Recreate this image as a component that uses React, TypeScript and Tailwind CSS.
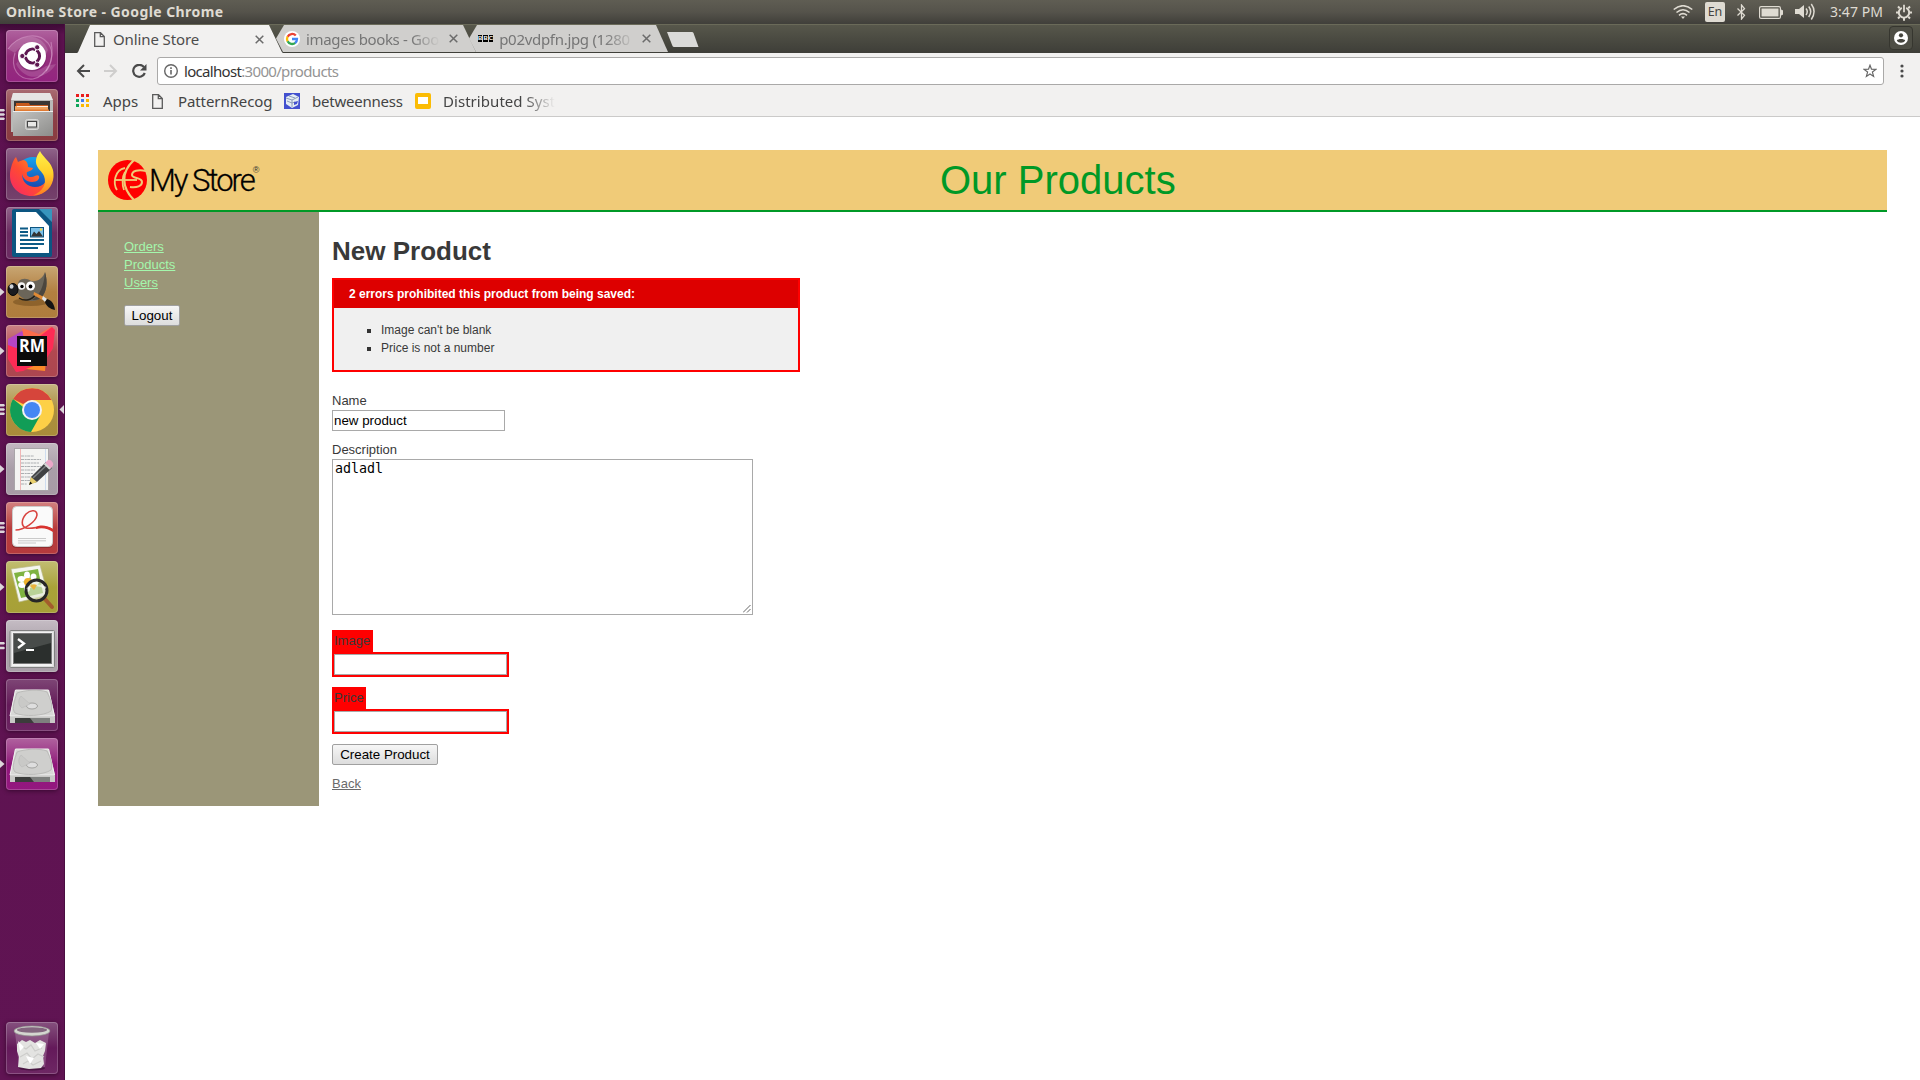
import React from 'react';

const UI = "font-['Noto_Sans',sans-serif]";

/* ---------- launcher icons, all on a 52x52 canvas ---------- */

const Ubuntu = () => (
  <g>
    <path d="M2 19c10-14 30-18 40-6 7 9 3 22-2 28" fill="none" stroke="#d79ccb" strokeOpacity=".55" strokeWidth="1.2" />
    <path d="M45 12c4 18-4 34-18 37C12 50 4 38 9 23" fill="none" stroke="#d79ccb" strokeOpacity=".55" strokeWidth="1.2" />
    <path d="M2 19C14 2 36 3 42 20l-4 8C36 14 20 8 9 23z" fill="#fff" fillOpacity=".15" />
    <path d="M50 34c-8 14-30 20-40 0l4-6c4 12 16 16 26 8z" fill="#fff" fillOpacity=".15" />
    <circle cx="26" cy="27" r="14.5" fill="#5c1150" fillOpacity=".35" />
    <circle cx="26" cy="26" r="14" fill="#fff" />
    <circle cx="26.5" cy="26" r="7" fill="none" stroke="#5e1751" strokeWidth="3.2" />
    <path d="M26.5 26H16M26.500 26l5.200-9.200M26.500 26l5.200 9.200" stroke="#fff" strokeWidth="1.300" />
    <circle cx="26.500" cy="26" r="5.400" fill="#fff" />
    {[[16.3, 26], [31.2, 17.300], [31.200, 34.700]].map(([x, y]) => (
      <circle key={y} cx={x} cy={y} r="2.600" fill="#5e1751" stroke="#fff" strokeWidth=".9" />
    ))}
  </g>
);

const Files = () => (
  <g>
    <path d="M7 4h37l3 8v31H5V12z" fill="#b9b9b7" />
    <path d="M7 4h37l3 7H5z" fill="#e6e6e4" />
    <rect x="8" y="12" width="36" height="12" fill="#3a3734" />
    <path d="M10 14h13l1 2h18v7H10z" fill="#c65a1c" />
    <path d="M9 17h33v6H9z" fill="#f0a25c" />
    <path d="M11 17.500h31" stroke="#fff0df" strokeWidth="1" />
    <path d="M9 20.500h34v3H9z" fill="#e07a32" />
    <path d="M7 22h40v25H7z" fill="url(#steel)" />
    <path d="M7 22.500h40" stroke="#eee" />
    <rect x="19.500" y="30.500" width="13" height="10" rx="2" fill="#b8b8b6" stroke="#d9d9d7" />
    <rect x="21.500" y="32.500" width="9" height="5.500" fill="#e8e8e6" stroke="#444" />
  </g>
);

const Firefox = () => (
  <g>
    <circle cx="27" cy="26" r="17" fill="url(#ffBlue)" />
    <path d="M5 20c1-5 3-9 5-11l2 5c2-1 4-2 6-2 3 1 4 4 4 7l5 1c-1 3-4 3-6 4-1 3 1 5 4 5 4 0 6-3 8-1 1 3-2 6-7 6-6 0-9-4-10-8 0 8 6 13 13 13 9 0 14-7 13-15 3 4 3 9 1 13-3 7-9 11-17 11C12 48 4 38 4 28c0-3 0-5 1-8z" fill="url(#ffRed)" />
    <path d="M34 3c1 3 4 5 6 8 6 6 8 11 7.500 18C47 38 40 47 27 47.500 37 43 41 36 38 28c-2-5-7-7-8-13-.5-5 2-9 4-12z" fill="url(#ffYellow)" />
  </g>
);

const Writer = () => (
  <g>
    <path d="M8 2h27l11 13v33a2 2 0 0 1-2 2H8a2 2 0 0 1-2-2V4a2 2 0 0 1 2-2z" fill="#0c5581" />
    <path d="M33 2h13v13z" fill="#3795bd" />
    <path d="M10 5h20l13 14v27H10z" fill="#fff" />
    <path d="M14 21.500h8M14 25h8M14 28.500h8M14 33h24M14 37h24M14 41h18" stroke="#0c5a86" strokeWidth="1.800" />
    <rect x="24.500" y="20.500" width="13" height="9.500" fill="#7cc0e8" stroke="#0c5581" />
    <path d="M25 29.500l3-5 2.500 2.500 2.500-3 4 5.500z" fill="#333" />
    <circle cx="35" cy="22.500" r="1.200" fill="#f5d547" />
  </g>
);

const Gimp = () => (
  <g>
    <ellipse cx="25" cy="36" rx="18" ry="4" fill="#5b3a12" opacity=".4" />
    <path d="M39 6c3 10 2 20-4 26-6 5-15 3-20-1l-6-6 4-10c3-3 8-3 12 0 7 1 12-3 14-9z" fill="#6b6559" />
    <path d="M39 6c3 10 2 20-4 26-3 2-6 2-9 2 8-5 12-14 13-28z" fill="#4b463e" />
    <circle cx="15.500" cy="20" r="3.800" fill="#f3f3f3" />
    <circle cx="24.500" cy="20" r="4.500" fill="#fff" />
    <circle cx="16" cy="20.500" r="1.700" />
    <circle cx="24.500" cy="20.500" r="1.900" />
    <ellipse cx="7" cy="23.500" rx="5" ry="6" fill="#1b1c20" stroke="#050505" />
    <ellipse cx="5.500" cy="20.500" rx="2" ry="2.200" fill="#cfd3d8" />
    <path d="M13 32c6 4 13 2 17-4" fill="none" stroke="#242019" strokeWidth="1.500" />
    <path d="M28 26l10 5-1.500 3-9-5z" fill="#e08a34" />
    <path d="M37 30l4 3-2 3-3-3z" fill="#dfe3e6" />
    <path d="M41 33c4 1 7 4 8 11-5-1-9-4-10-8z" fill="#141414" />
  </g>
);

const RubyMine = () => (
  <g>
    <path d="M2 14l14-8 17 8-15 30-7 3L2 33z" fill="#b545c4" />
    <path d="M16 3l17 6 12-7 4 3-3 20-16 6-12-16z" fill="#fb6c4c" />
    <path d="M2 20l8 3 20-9 16-12 3 3-2 18-8 13-22 10-7 1L2 34z" fill="#fd2b55" />
    <path d="M20 44l20-8-1 10z" fill="#fb8a2a" />
    <rect x="11" y="11" width="30" height="30" fill="#0b0b0b" />
    <text x="13" y="27.300" fontFamily="Open Sans" fontWeight="700" fontSize="17" fill="#fff" textLength="26" lengthAdjust="spacingAndGlyphs">RM</text>
    <rect x="14" y="35" width="11" height="2" fill="#fff" />
  </g>
);

const Chrome = () => (
  <g>
    <circle cx="26" cy="26" r="22" fill="#fdd047" />
    <path d="M45.500 16H26l-9 4-10-5A22 22 0 0 1 45.500 16z" fill="#d6453b" />
    <path d="M7 15A22 22 0 0 0 25 48l9-16-8-2z" fill="#119d57" />
    <circle cx="26" cy="26" r="10" fill="#f2f2f2" />
    <circle cx="26" cy="26" r="8" fill="#4587f3" />
  </g>
);

const Gedit = () => (
  <g>
    <rect x="8.500" y="5.500" width="34" height="42" fill="#f4f4f2" stroke="#a9a5a8" />
    <path d="M14.500 6v41" stroke="#efa6a6" strokeWidth=".8" />
    <path d="M39.500 6v41" stroke="#b5cdec" strokeWidth=".6" />
    <path d="M15 13h13M15 16.500h20M15 20h18M15 23.500h20M15 27h14M15 30.500h12M15 34h11M15 37.500h9M15 41h6" stroke="#a3a6a9" strokeWidth=".9" strokeDasharray="3 .7 2 .5" />
    <path d="M25 34l15-15 6 6-15 14-7 2z" fill="#3f4142" />
    <path d="M27 35l15-14" stroke="#7c7f80" strokeWidth="1.500" />
    <path d="M25 34l6 5-8 3z" fill="#e8cf6d" />
    <path d="M23 42l1.200-3.500 2 2z" fill="#111" />
    <path d="M39 20l3-3q3-1 5 3 1 2-1 4l-2 2z" fill="#eba7c8" />
    <path d="M38.500 20.500l5.500 5.500" stroke="#d7d7d7" strokeWidth="2" />
  </g>
);

const Pdf = () => (
  <g>
    <rect x="6" y="5" width="40.500" height="41" rx="4" fill="#6b2020" opacity=".5" />
    <rect x="6.500" y="4.500" width="40" height="40" rx="4" fill="#fafafa" stroke="#ccc" />
    <path d="M9.500 28C18 28 30 20 31 13c0-5-6-6-11-1-5 6-5 12 0 14 8 2 18-5 27 2" fill="none" stroke="#d8433f" strokeWidth="1.600" />
    <path d="M30 25c6-3 11-1 17 2v3c-5-3-10-5-17-3z" fill="#d8332f" />
    <path d="M12 36.500h28M12 38.800h28M12 41h18" stroke="#c4c4c4" strokeWidth=".9" />
  </g>
);

const ImageViewer = () => (
  <g>
    <path d="M5 8l29-4 8 30-29 7z" fill="#f5f6ef" stroke="#b8b98a" strokeWidth=".7" />
    <path d="M8 12l24-4 5 24-22 5z" fill="#7fb341" />
    <g fill="#fff">
      <ellipse cx="21" cy="14.500" rx="3" ry="4" /><ellipse cx="27.500" cy="16" rx="3" ry="3.500" /><ellipse cx="29" cy="21" rx="4" ry="3" />
      <ellipse cx="15.500" cy="18" rx="4" ry="3" /><ellipse cx="16" cy="24" rx="3.800" ry="3" /><ellipse cx="21" cy="27.500" rx="3" ry="3.500" />
    </g>
    <circle cx="22" cy="21" r="4" fill="#efb12d" />
    <path d="M38 37l8 9" stroke="#a35d2c" strokeWidth="4" strokeLinecap="round" />
    <circle cx="30.500" cy="29.500" r="10.500" fill="#dfe8d0" fillOpacity=".6" stroke="#262626" strokeWidth="3" />
    <path d="M21 28q8-7 19-1" fill="none" stroke="#fff" strokeOpacity=".6" strokeWidth="2" />
    <path d="M24 25q3-3 7-1l-3 5z" fill="#eab33c" />
  </g>
);

const Terminal = () => (
  <g>
    <rect x="4" y="10.500" width="44.500" height="37" rx="1" fill="#dcdcdc" stroke="#808080" />
    <rect x="6" y="12" width="40.500" height="34" fill="#f3f3f3" />
    <rect x="7.500" y="13.500" width="38" height="30" fill="#2b2f2d" stroke="#777" />
    <path d="M8 14h37v9L8 33z" fill="#484c4a" />
    <path d="M12 19l6 4.500-6 4.500" fill="none" stroke="#fff" strokeWidth="2.300" />
    <path d="M20 30h8" stroke="#fff" strokeWidth="2" />
  </g>
);

const Drive = () => (
  <g>
    <path d="M9 11h34l6 26v7H4v-7z" fill="#b5b5b3" />
    <path d="M9.500 11h33l6 26H4z" fill="#d8d8d6" stroke="#f1f1f0" />
    <path d="M11 14c8-3 22-4 30-1 4 8 6 14 4 19-7 5-27 6-36 2-4-5 0-13 2-20z" fill="#cfcfcd" stroke="#b8b8b6" strokeWidth=".9" />
    <ellipse cx="26" cy="27" rx="5.500" ry="3" fill="#dedede" stroke="#a3a3a1" />
    <path d="M15 17c-4 5-2 10 1 12l8-4z" fill="#c9c9c7" stroke="#bbb" strokeWidth=".6" />
    <path d="M4 38h45v6H4z" fill="#c9c9c7" />
    <path d="M9 39h35v5H9z" fill="#3b3c3b" />
    <path d="M24 39h20v5H28z" fill="#7e807e" />
  </g>
);

const Trash = () => (
  <g>
    <path d="M9 10l4 35c4 3 22 3 26 0l4-35z" fill="#b48bb0" fillOpacity=".4" />
    <ellipse cx="26" cy="46" rx="13" ry="2.500" fill="#2c0826" opacity=".55" />
    <path d="M11 22l5-4 4 2 4-2 5 3 5-3 6 3-1 8-2 5 1 8-3 4-12 1-11-2 1-10-2-6z" fill="#e3e3e1" />
    <path d="M15 24l5 3 5-4 4 6 7-3M14 35l7-4 5 6 6-5 6 3M17 42l5-3 5 4 8-4" fill="none" stroke="#cdcdcb" strokeWidth="1.200" />
    <path d="M12 19l6 6-4 4zM30 21l4 6 4-5zM20 34l4 8 4-6z" fill="#fff" />
    <ellipse cx="26" cy="9" rx="18" ry="5" fill="#d4d6d0" stroke="#92958f" strokeWidth=".7" />
    <ellipse cx="26" cy="8" rx="15" ry="2.700" fill="#83667f" />
  </g>
);

type Item = { name: string; icon: () => React.JSX.Element; bg: string; pip?: 'one' | 'two' | 'three'; active?: boolean };

const ITEMS: Item[] = [
  { name: 'Search', icon: Ubuntu, bg: 'from-[#b0629f] via-[#94307c] to-[#942480]' },
  { name: 'Files', icon: Files, bg: 'from-[#a96c72] via-[#8c4049] to-[#8a3c40]', pip: 'three' },
  { name: 'Firefox', icon: Firefox, bg: 'from-[#90648a] via-[#6b3262] to-[#75426c]' },
  { name: 'Writer', icon: Writer, bg: 'from-[#90648a] via-[#6b2a60] to-[#6c2d63]' },
  { name: 'GIMP', icon: Gimp, bg: 'from-[#c8a673] via-[#b28040] to-[#ae7c3d]', pip: 'one' },
  { name: 'RubyMine', icon: RubyMine, bg: 'from-[#cb8286] via-[#b14850] to-[#ac4650]', pip: 'one' },
  { name: 'Chrome', icon: Chrome, bg: 'from-[#c6b481] via-[#ab903f] to-[#a98c3a]', pip: 'three', active: true },
  { name: 'Text Editor', icon: Gedit, bg: 'from-[#c3b8c1] via-[#a99ea8] to-[#a79ba5]', pip: 'one' },
  { name: 'Document Viewer', icon: Pdf, bg: 'from-[#d28080] via-[#b83c3d] to-[#b53a3d]', pip: 'three' },
  { name: 'Image Viewer', icon: ImageViewer, bg: 'from-[#c2bd72] via-[#a9a338] to-[#a7a038]', pip: 'one' },
  { name: 'Terminal', icon: Terminal, bg: 'from-[#c5bcc4] via-[#a89fa7] to-[#aaa1a9]', pip: 'two' },
  { name: 'Drive', icon: Drive, bg: 'from-[#7e4676] via-[#641a59] to-[#6c2562]' },
  { name: 'Volume', icon: Drive, bg: 'from-[#b0629f] via-[#90167b] to-[#94187f]', pip: 'one' },
];

const Tile = ({ item }: { item: Item }) => {
  const Icon = item.icon;
  return (
    <div className="relative flex h-[52px] w-full shrink-0 pl-[6px]">
      {item.pip && (
        <svg className="absolute left-0 top-[18px]" width="5" height="16" fill="#dcd6da">
          {item.pip === 'one' && <path d="M0 4l4.500 4L0 12z" />}
          {item.pip === 'two' && <path d="M0 4h4l1 1.200-1 1.200H0zM0 8.800h4l1 1.200-1 1.200H0z" />}
          {item.pip === 'three' && <path d="M0 2h4l1 1.200-1 1.200H0zM0 6.300h4l1 1.200-1 1.200H0zM0 10.600h4l1 1.200-1 1.200H0z" />}
        </svg>
      )}
      <div className={`h-[52px] w-[52px] overflow-hidden rounded-[4px] bg-linear-to-b shadow-[0_1px_4px_rgba(30,0,25,0.6)] ring-1 ring-inset ring-white/20 ${item.bg}`}>
        <svg width="52" height="52" viewBox="0 0 52 52"><Icon /></svg>
      </div>
      {item.active && (
        <svg className="absolute left-[59px] top-[21px]" width="6" height="10" fill="#dcd6da"><path d="M5 0v9L.5 4.500z" /></svg>
      )}
    </div>
  );
};

const Launcher = () => (
  <div className="flex w-[65px] shrink-0 flex-col gap-[7px] border-r border-[#4a0d41] bg-linear-to-b from-[#3d0a36] via-[#5c114f] via-[1%] to-[#601453] pb-[6px] pt-[6px]">
    <svg className="absolute" width="0" height="0">
      <defs>
        <linearGradient id="steel" x2="1" y2="1"><stop stopColor="#c4c4c2" /><stop offset="1" stopColor="#8d8d8b" /></linearGradient>
        <linearGradient id="ffRed" x1=".9" x2="0" y1=".1" y2="1"><stop stopColor="#ff9a1f" /><stop offset=".5" stopColor="#ff4b32" /><stop offset="1" stopColor="#f5236c" /></linearGradient>
        <linearGradient id="ffYellow" x2="0" y2="1"><stop stopColor="#fff04a" /><stop offset=".5" stopColor="#ffd02a" /><stop offset="1" stopColor="#ff7a22" /></linearGradient>
        <linearGradient id="ffBlue" x2="0" y2="1"><stop stopColor="#15a4ee" /><stop offset="1" stopColor="#1a3fa8" /></linearGradient>
      </defs>
    </svg>
    {ITEMS.map((i) => <Tile key={i.name} item={i} />)}
    <div className="mt-auto"><Tile item={{ name: 'Trash', icon: Trash, bg: 'from-[#85507e] via-[#64195a] to-[#6e2764]' }} /></div>
  </div>
);

/* ---------- top panel ---------- */

const TopPanel = () => (
  <div className={`flex h-6 items-center bg-linear-to-b from-[#5f5d53] via-[#55534b] to-[#403f3a] text-[#dfdbd2] ${UI}`}>
    <div className="ml-[6px] text-[14px] font-bold leading-6 tracking-[0.42px]">Online Store - Google Chrome</div>
    <svg className="ml-auto" width="20" height="14" viewBox="0 0 20 14" fill="none" stroke="#dfdbd2" strokeWidth="1.600">
      <path d="M.7 4.500Q10-3 19.300 4.500M3.500 7.500Q10 2 16.500 7.500M6 10.300Q10 7 14 10.300" />
      <path d="M8 11.500h4l-2 2.500z" fill="#dfdbd2" stroke="none" />
    </svg>
    <div className="ml-3 flex h-5 w-5 items-center justify-center rounded-[2px] bg-[#dfdbd2] text-[12.5px] leading-none text-[#45443f]">En</div>
    <svg className="ml-3" width="9" height="16" viewBox="0 0 9 16" fill="none" stroke="#dfdbd2" strokeWidth="1.300"><path d="M.5 4.500l7 6.800L4.500 15V1l3 3.700-7 6.800" /></svg>
    <svg className="ml-[13px]" width="24" height="13" viewBox="0 0 24 13"><rect x=".6" y=".6" width="20.800" height="11.800" rx="1.500" fill="none" stroke="#dfdbd2" strokeWidth="1.200" /><rect x="2.500" y="2.500" width="17" height="8" fill="#dfdbd2" /><path d="M22 4l1.500.5v4L22 9z" fill="#dfdbd2" stroke="#dfdbd2" /></svg>
    <svg className="ml-3" width="20" height="18" viewBox="0 0 20 18" fill="none" stroke="#dfdbd2" strokeWidth="1.500"><path d="M0 6h4l5-4v13l-5-4H0z" fill="#dfdbd2" stroke="none" /><path d="M11 5.500q2.500 3 0 6.500M13.700 3.500q4 5 0 10.500M16.300 1q5.500 7.500 0 15.500" /></svg>
    <div className="ml-[15px] w-[54px] whitespace-nowrap text-[14px] leading-6 tracking-[0.05px]">3:47 PM</div>
    <svg className="ml-[12px] mr-2" width="16" height="17" viewBox="0 0 16 17" fill="none" stroke="#dfdbd2">
      <path d="M5.800 3.800a5.200 5.200 0 1 0 4.400 0" strokeWidth="2" />
      <path d="M8 .8v7.500" strokeWidth="1.800" />
      <path d="M2 2.500l1.700 1.700M14 2.500l-1.700 1.700M0 8.500h2.500M13.500 8.500H16M2 14.500l1.700-1.700M14 14.500l-1.700-1.700M8 14v2.800" strokeWidth="2" />
    </svg>
  </div>
);

/* ---------- browser chrome ---------- */

const PageIcon = () => (
  <svg width="11" height="15" viewBox="0 0 11 15" fill="none" stroke="#5a5a5a" strokeWidth="1.300"><path d="M.7.7h5.800l3.800 3.800v9.800H.7zM6.300.7v4h4" /></svg>
);
const Close = () => (
  <svg width="9" height="9" viewBox="0 0 9 9" stroke="#6b6b6b" strokeWidth="1.500"><path d="M.7.7l7.600 7.600M8.300.7L.7 8.300" /></svg>
);
const GoogleG = () => (
  <svg width="16" height="16" viewBox="0 0 16 16">
    <circle cx="8" cy="8" r="8" fill="#fff" />
    <g fill="none" strokeWidth="2.300">
      <path d="M11.800 4.600A5 5 0 0 0 3.600 5.800" stroke="#ea4335" />
      <path d="M3.600 5.600a5 5 0 0 0 0 4.800" stroke="#fbbc05" />
      <path d="M3.600 10.200a5 5 0 0 0 7.700 1.600" stroke="#34a853" />
      <path d="M8 8h5a5 5 0 0 1-1.900 4" stroke="#4285f4" />
    </g>
  </svg>
);
const Bbc = () => (
  <div className="flex gap-px font-['Liberation_Sans',sans-serif] text-[6px] font-bold leading-[7px] text-white">
    {['B', 'B', 'C'].map((c, i) => <span key={i} className="h-[7px] w-[4.4px] bg-black text-center">{c}</span>)}
  </div>
);

const TabStrip = () => (
  <div className="flex h-[29px] border-t border-[#6a6a59] bg-linear-to-b from-[#57574b] to-[#3e3e38] pl-[12px] text-[15px] leading-7">
    <div className="relative z-10 flex w-[206px] items-center bg-[#f2f1f0] pl-[17px] text-[#4c4c4c] [clip-path:polygon(0_100%,1px_97%,13px_0,192px_0,205px_97%,206px_100%)]">
      <PageIcon />
      <span className="ml-[8px] w-[142px] whitespace-nowrap tracking-[-0.12px]">Online Store</span>
      <Close />
    </div>
    <div className="relative -ml-[13px] mb-px flex w-[206px] items-center bg-[#d0cfcd] pl-[14px] text-[#757575] [clip-path:polygon(6px_50%,14px_0,193px_0,206px_100%,13px_100%)]">
      <GoogleG />
      <span className="ml-[6px] w-[136px] whitespace-nowrap tracking-[-0.35px] [mask-image:linear-gradient(to_right,black_105px,transparent_134px)]">images books - Goo</span>
      <span className="ml-[7px] flex"><Close /></span>
    </div>
    <div className="relative -ml-[13px] mb-px flex w-[206px] items-center bg-[#d0cfcd] pl-[15px] text-[#757575] [clip-path:polygon(6px_50%,14px_0,193px_0,205px_100%,13px_100%)]">
      <Bbc />
      <span className="ml-[6px] w-[136px] whitespace-nowrap tracking-[-0.3px] [mask-image:linear-gradient(to_right,black_105px,transparent_137px)]">p02vdpfn.jpg (1280</span>
      <span className="ml-[7px] flex"><Close /></span>
    </div>
    <svg className="-ml-[3px] mt-[7px]" width="34" height="16"><path d="M1 0h25q1 0 1.500 1l5 14H8q-1 0-1.500-1z" fill="#dadad8" /></svg>
    <div className="ml-auto mr-[7px] mt-px flex h-6 w-6 items-center justify-center rounded-[4px] border border-[#36362f] bg-[#4e4e45]">
      <svg width="14" height="14" viewBox="0 0 14 14"><circle cx="7" cy="7" r="7" fill="#fff" /><circle cx="7" cy="4.300" r="2.100" fill="#45453e" /><path d="M2.800 9.500c1-2 7.400-2 8.400 0-1.500 3-6.900 3-8.400 0z" fill="#45453e" /></svg>
    </div>
  </div>
);

const Toolbar = () => (
  <div className="flex h-8 items-end bg-[#f2f1f0]">
    <svg className="ml-[11px] mb-[7px]" width="14" height="14" viewBox="0 0 14 14" fill="none" stroke="#4a4a4a" strokeWidth="2"><path d="M14 7H2M8 1L2 7l6 6" /></svg>
    <svg className="ml-[14px] mb-[7px]" width="14" height="14" viewBox="0 0 14 14" fill="none" stroke="#cfcecd" strokeWidth="2"><path d="M0 7h12M6 1l6 6-6 6" /></svg>
    <svg className="ml-[14px] mb-[7px]" width="15" height="14" viewBox="0 0 15 14"><path d="M12 3.200A6 6 0 1 0 12.800 9" fill="none" stroke="#4a4a4a" strokeWidth="2.200" /><path d="M14.500 0v6.500H8z" fill="#4a4a4a" /></svg>
    <div className="ml-[10px] flex h-7 w-[1727px] items-center rounded-[3px] border border-[#aaa9a8] bg-white pl-[6px] pr-[6px]">
      <svg width="14" height="14" viewBox="0 0 14 14" fill="none" stroke="#666"><circle cx="7" cy="7" r="6.300" strokeWidth="1.400" /><path d="M7 6v4.500M7 3.200V5" strokeWidth="1.600" /></svg>
      <span className="mb-px ml-[6px] text-[15px] leading-6 tracking-[-0.68px] text-[#333]">localhost<span className="text-[#949494]">:3000/products</span></span>
      <svg className="ml-auto" width="14" height="14" viewBox="0 0 14 14" fill="none" stroke="#666" strokeWidth="1.200"><path d="M7 1.200l1.500 4 4.400.2-3.500 2.700 1.200 4.300L7 10l-3.600 2.400 1.200-4.300L1.100 5.400l4.400-.2z" /></svg>
    </div>
    <svg className="mb-[6px] ml-[16px]" width="4" height="15" fill="#4a4a4a"><circle cx="2" cy="2" r="1.600" /><circle cx="2" cy="7" r="1.600" /><circle cx="2" cy="12" r="1.600" /></svg>
  </div>
);

const APP_DOTS = ['#ea1d1d', '#ea1d1d', '#ea1d1d', '#0fa55a', '#3f7df0', '#fbb800', '#0fa55a', '#fbb800', '#fbb800'];

const Bookmarks = () => (
  <div className="flex h-8 items-center border-b border-[#cbcac9] bg-[#f2f1f0] pl-[11px] text-[15px] leading-8 text-[#444]">
    <div className="grid grid-cols-3 gap-[2px]">
      {APP_DOTS.map((c, i) => <i key={i} className="size-[3px]" style={{ background: c }} />)}
    </div>
    <span className="ml-[14px] w-[35px] whitespace-nowrap">Apps</span>
    <span className="ml-[14px] mt-px flex"><PageIcon /></span>
    <span className="ml-[15px] w-[95px] whitespace-nowrap tracking-[-0.1px]">PatternRecog</span>
    <svg className="ml-[11px]" width="16" height="16" viewBox="0 0 16 16"><rect width="16" height="16" fill="#4250cf" /><path d="M2 4l7-3 6 3-1 8-6 3-6-4z" fill="#e4ecf4" /><path d="M2 5l6 2 6-3M8 7v7M3 8l5 2 3-1M5 3l6 2" fill="none" stroke="#8293b4" strokeWidth=".9" /><path d="M10 9l4-1-1 3-3 1z" fill="#4250cf" /></svg>
    <span className="ml-[12px] w-[91px] whitespace-nowrap tracking-[-0.22px]">betweenness</span>
    <svg className="ml-[12px]" width="16" height="16" viewBox="0 0 16 16"><rect width="16" height="16" rx="2" fill="#fbbc05" /><rect x="3" y="4" width="10" height="7" fill="#fff" /></svg>
    <span className="ml-[12px] w-[112px] whitespace-nowrap tracking-[0.05px] [mask-image:linear-gradient(to_right,black_80px,transparent_112px)]">Distributed Syst</span>
  </div>
);

/* ---------- store page ---------- */

const Logo = () => (
  <div className="flex w-[170px] items-center pl-[10px]">
    <svg className="shrink-0" width="39" height="40" viewBox="0 0 39 40">
      <ellipse cx="19.500" cy="20" rx="19.500" ry="20" fill="#f00" />
      <g fill="none" stroke="#f0cb78">
        <path d="M26 0C13 12 13 27 26 40" strokeWidth="2.200" />
        <path d="M7 20h22" strokeWidth="1.800" />
        <path d="M17 8C6 10 5 24 9 30M17 12c-3 5-3 13-1 18" strokeWidth="1.800" />
        <path d="M38 11c-8-2-14 0-14 4 0 4 10 2 10 7 0 4-5 6-12 5" strokeWidth="2" />
      </g>
    </svg>
    <span className="ml-[2px] mt-[2px] whitespace-nowrap font-['Roboto','Liberation_Sans',sans-serif] text-[31px] font-light leading-10 tracking-[-2px] text-black [-webkit-text-stroke:0.3px_black]">My Store</span>
    <span className="-ml-px mb-[20px] font-['Liberation_Sans',sans-serif] text-[9px] leading-none text-[#333]">®</span>
  </div>
);

const BTN = "h-[21px] rounded-[2px] border border-[#a0a0a0] bg-linear-to-b from-[#f6f6f6] to-[#dddddd] text-center text-[13.333px] leading-[19px] text-black";

const StorePage = () => (
  <div className="ml-[33px] mt-[33px] w-[1789px] font-['Liberation_Sans',Arial,sans-serif] text-[13px] leading-[18px] text-[#393939]">
    <div className="flex h-[62px] items-center border-b-2 border-[#009926] bg-[#f0cb78]">
      <Logo />
      <div className="ml-[672px] text-[40px] leading-[60px] text-[#009926]">Our Products</div>
    </div>
    <div className="flex h-[594px]">
      <div className="flex w-[221px] flex-col items-start bg-[#9b9678] pl-[26px] pt-[26px] text-[#a4f7ac]">
        {['Orders', 'Products', 'Users'].map((l) => <a key={l} className="underline">{l}</a>)}
        <button className={`mt-[13px] w-[56px] ${BTN}`}>Logout</button>
      </div>
      <div className="flex flex-col items-start pl-[13px]">
        <h1 className="mt-[21px] text-[26px] font-bold leading-[36px]">New Product</h1>
        <div className="mt-[9px] h-[94px] w-[468px] border-2 border-[#f00] bg-[#f0f0f0] text-[12px]">
          <h2 className="h-7 bg-[#d00] pl-[15px] font-bold leading-7 text-white">2 errors prohibited this product from being saved:</h2>
          <ul className="pl-[33px] pt-[13px]">
            {['Image can\'t be blank', 'Price is not a number'].map((e) => (
              <li key={e} className="flex items-center"><i className="mt-[2px] mr-[10px] size-1 bg-[#333]" />{e}</li>
            ))}
          </ul>
        </div>
        <label className="mt-5">Name</label>
        <div className="h-[21px] w-[173px] border border-[#a9a9a9] bg-white pl-px text-[13.333px] leading-[19px] text-black">new product</div>
        <label className="mt-[10px]">Description</label>
        <div className="relative h-[156px] w-[421px] border border-[#a9a9a9] bg-white pl-[2px] pt-px font-['DejaVu_Sans_Mono',monospace] text-[13.333px] leading-4 text-black">
          adladl
          <svg className="absolute bottom-px right-px" width="8" height="8" stroke="#555" strokeWidth=".9"><path d="M0 7.500L7.500 0M4 7.500L7.500 4" /></svg>
        </div>
        {[['Image', 'mt-[15px]'], ['Price', 'mt-[10px]']].map(([l, m]) => (
          <div key={l} className={`flex flex-col items-start ${m}`}>
            <label className="h-[22px] bg-[#f00] pl-[2px] pr-[2.5px] pt-[2px]">{l}</label>
            <div className="border-2 border-[#f00]"><div className="h-[21px] w-[173px] border border-[#a9a9a9] bg-white" /></div>
          </div>
        ))}
        <button className={`mt-[10px] w-[106px] ${BTN}`}>Create Product</button>
        <a className="mt-[10px] text-[#6a6a6a] underline">Back</a>
      </div>
    </div>
  </div>
);

export default function App() {
  return (
    <div className="flex h-[1080px] w-[1920px] flex-col overflow-hidden bg-white">
      <TopPanel />
      <div className="flex min-h-0 flex-1">
        <Launcher />
        <div className={`min-w-0 flex-1 bg-white ${UI}`}>
          <TabStrip />
          <Toolbar />
          <Bookmarks />
          <StorePage />
        </div>
      </div>
    </div>
  );
}
